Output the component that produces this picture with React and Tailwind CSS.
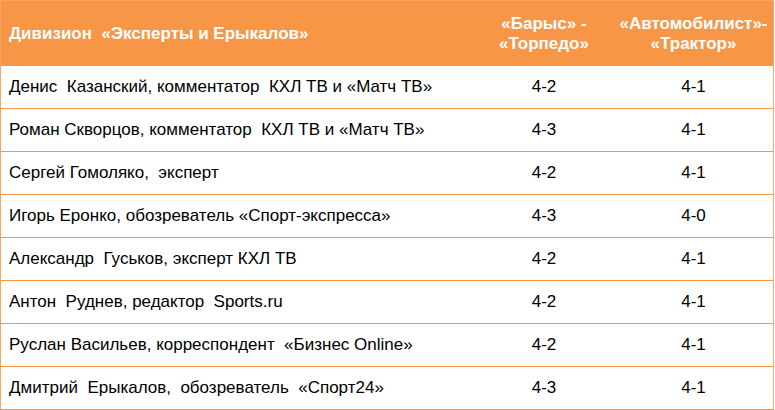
import React from 'react';

const rows = [
  ['Денис  Казанский, комментатор  КХЛ ТВ и «Матч ТВ»', '4-2', '4-1'],
  ['Роман Скворцов, комментатор  КХЛ ТВ и «Матч ТВ»', '4-3', '4-1'],
  ['Сергей Гомоляко,  эксперт', '4-2', '4-1'],
  ['Игорь Еронко, обозреватель «Спорт-экспресса»', '4-3', '4-0'],
  ['Александр  Гуськов, эксперт КХЛ ТВ', '4-2', '4-1'],
  ['Антон  Руднев, редактор  Sports.ru', '4-2', '4-1'],
  ['Руслан Васильев, корреспондент  «Бизнес Online»', '4-2', '4-1'],
  ['Дмитрий  Ерыкалов,  обозреватель  «Спорт24»', '4-3', '4-1'],
];

export default function App() {
  return (
    <div className="w-[775px] h-[410px] bg-white" style={{ fontFamily: '"Liberation Sans", Arial, sans-serif' }}>
      <div className="w-[774px] border-t border-l border-r border-[#f8a566]">
        <div className="grid grid-cols-[473px_140px_1fr] h-[65px] bg-[#f79646] text-white font-bold text-[17px] leading-[20px]">
          <div className="flex items-center pl-2 whitespace-pre">Дивизион  «Эксперты и Ерыкалов»</div>
          <div className="flex items-center justify-center text-center whitespace-pre">«Барыс» -{'\n'}«Торпедо»</div>
          <div className="flex items-center justify-center text-center whitespace-pre">«Автомобилист»-{'\n'}«Трактор»</div>
        </div>
        {rows.map((r, i) => (
          <div key={i} className="grid grid-cols-[473px_140px_1fr] h-[43px] border-b border-[#f79646] text-[17px] text-black">
            <div className="flex items-center pl-2 whitespace-pre">{r[0]}</div>
            <div className="flex items-center justify-center">{r[1]}</div>
            <div className="flex items-center justify-center">{r[2]}</div>
          </div>
        ))}
      </div>
    </div>
  );
}
